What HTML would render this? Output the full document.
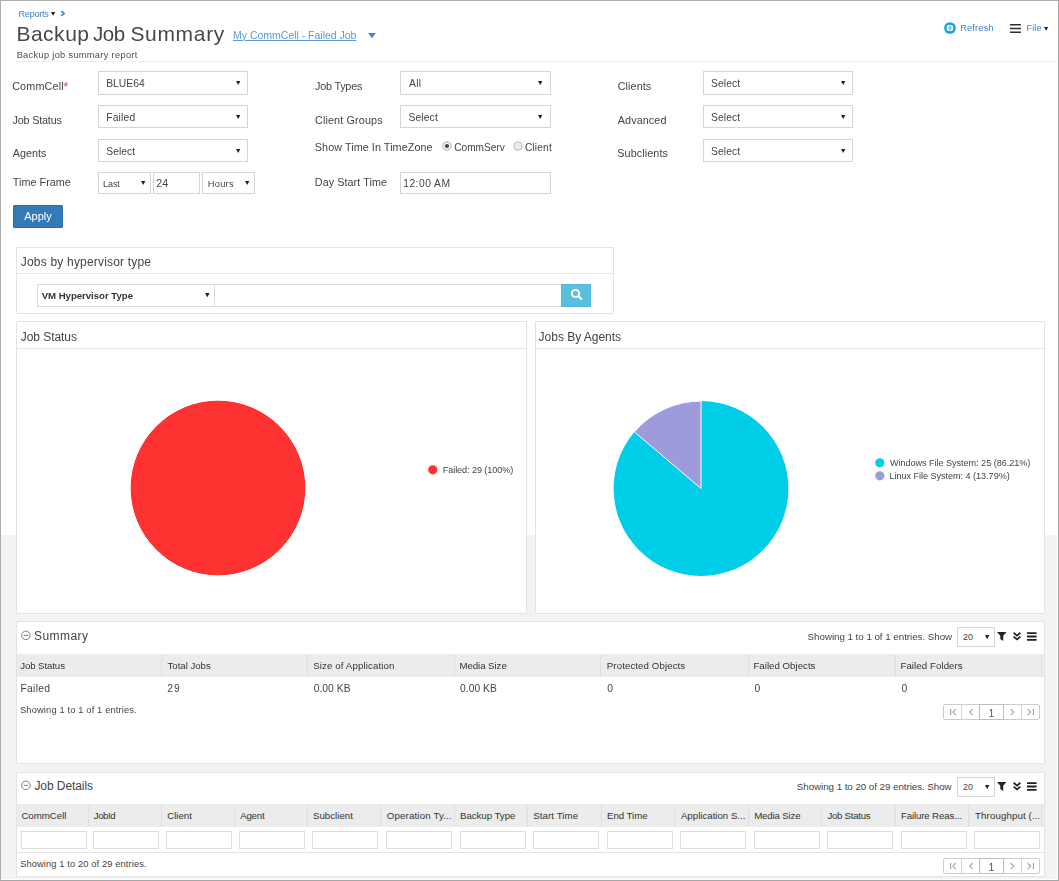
<!DOCTYPE html>
<html><head><meta charset="utf-8"><title>Backup Job Summary</title>
<style>
*{box-sizing:border-box;margin:0;padding:0}
html,body{width:1059px;height:881px;overflow:hidden;background:#fff}
body{font-family:"Liberation Sans",sans-serif;color:#444;position:relative;font-size:12px}
.abs{position:absolute}
#pg{position:absolute;left:0;top:0;width:1059px;height:881px;overflow:hidden;filter:blur(0.3px)}
.t{position:absolute;white-space:nowrap}
.box{position:absolute;background:#fff;border:1px solid #d5d5d5}
.panel{position:absolute;background:#fff;border:1px solid #e3e3e3;border-radius:1px}
.hl{position:absolute;height:1px;background:#e6e6e6}
.vl{position:absolute;width:1px;background:#e0e0e0}
svg{display:block;overflow:visible}
</style></head><body>
<div id="pg">
<div class="abs" style="left:1px;top:535px;width:1056px;height:344px;background:#f3f3f3"></div>
<div class="t" style="left:18.55px;top:8.05px;font-size:9.1px;line-height:13px;color:#3f80c6;letter-spacing:-0.264px;">Reports</div>
<svg class="abs" style="left:50.6px;top:12.1px" width="4.3" height="3.8" viewBox="0 0 4.3 3.8"><path d="M0 0H4.3L2.15 3.8Z" fill="#222"/></svg>
<svg class="abs" style="left:60px;top:10px" width="6" height="7" viewBox="0 0 6 7"><path d="M1.2 1.0L4.2 3.5L1.2 6" fill="none" stroke="#2b80c4" stroke-width="1.5"/></svg>
<div class="t" style="left:16.38px;top:20.12px;font-size:21px;line-height:27px;color:#474747;letter-spacing:0.516px;">Backup</div>
<div class="t" style="left:92.99px;top:20.30px;font-size:20.5px;line-height:27px;color:#474747;letter-spacing:-0.449px;">Job</div>
<div class="t" style="left:130.41px;top:20.12px;font-size:21px;line-height:27px;color:#474747;letter-spacing:0.678px;">Summary</div>
<div class="t" style="left:233.03px;top:27.83px;font-size:10.6px;line-height:15px;color:#5a9bd8;letter-spacing:-0.059px;text-decoration:underline;">My CommCell - Failed Job</div>
<svg class="abs" style="left:367.6px;top:33.3px" width="7.8" height="5.2" viewBox="0 0 7.8 5.2"><path d="M0 0H7.8L3.9 5.2Z" fill="#3388dd"/></svg>
<div class="t" style="left:16.65px;top:48.51px;font-size:9.2px;line-height:13px;color:#4c4c4c;letter-spacing:0.347px;">Backup job summary report</div>
<div class="abs" style="left:17px;top:61px;width:1040px;height:1px;background:#eeeeee"></div>
<svg class="abs" style="left:943.7px;top:21.7px" width="13" height="13" viewBox="0 0 13 13"><circle cx="6" cy="6" r="5.85" fill="#1ba1e2"/><circle cx="6" cy="6" r="3.3" fill="#fff"/><circle cx="6" cy="6" r="1.8" fill="#1ba1e2"/><path d="M5.2 1.9H6.8V4Z M6.8 10.1H5.2V8Z" fill="#1ba1e2"/><path d="M4 6L5.4 4.8V7.2Z M8 6L6.6 4.8V7.2Z" fill="#fff"/></svg>
<div class="t" style="left:960.26px;top:21.61px;font-size:9.2px;line-height:13px;color:#3f80c6;letter-spacing:0.187px;">Refresh</div>
<svg class="abs" style="left:1010px;top:23px" width="12" height="11" viewBox="0 0 12 11"><path d="M0 1.1H10.9V2.5H0Z M0 4.85H10.9V6.25H0Z M0 8.6H10.9V10H0Z" fill="#2e2e2e"/></svg>
<div class="t" style="left:1026.56px;top:21.68px;font-size:9px;line-height:13px;color:#3f80c6;letter-spacing:0.112px;">File</div>
<svg class="abs" style="left:1043.8px;top:27.3px" width="4.2" height="3.7" viewBox="0 0 4.2 3.7"><path d="M0 0H4.2L2.1 3.7Z" fill="#222"/></svg>
<div class="t" style="left:12.16px;top:78.86px;font-size:10.8px;line-height:15px;color:#444;letter-spacing:0.164px;">CommCell</div>
<div class="t" style="left:63.19px;top:77.90px;font-size:13px;line-height:18px;color:#f5403c;">*</div>
<div class="t" style="left:12.40px;top:113.46px;font-size:10.8px;line-height:15px;color:#444;letter-spacing:-0.164px;">Job Status</div>
<div class="t" style="left:12.84px;top:146.16px;font-size:10.8px;line-height:15px;color:#444;">Agents</div>
<div class="t" style="left:12.75px;top:174.96px;font-size:10.8px;line-height:15px;color:#444;letter-spacing:0.035px;">Time Frame</div>
<div class="t" style="left:315.08px;top:78.86px;font-size:10.8px;line-height:15px;color:#444;letter-spacing:-0.220px;">Job Types</div>
<div class="t" style="left:314.94px;top:113.46px;font-size:10.8px;line-height:15px;color:#444;letter-spacing:0.141px;">Client Groups</div>
<div class="t" style="left:314.81px;top:139.76px;font-size:10.8px;line-height:15px;color:#444;letter-spacing:0.066px;">Show Time In TimeZone</div>
<div class="t" style="left:314.84px;top:174.96px;font-size:10.8px;line-height:15px;color:#444;letter-spacing:0.055px;">Day Start Time</div>
<div class="t" style="left:617.70px;top:78.86px;font-size:10.8px;line-height:15px;color:#444;letter-spacing:0.092px;">Clients</div>
<div class="t" style="left:617.78px;top:113.46px;font-size:10.8px;line-height:15px;color:#444;letter-spacing:0.096px;">Advanced</div>
<div class="t" style="left:617.31px;top:146.16px;font-size:10.8px;line-height:15px;color:#444;letter-spacing:0.094px;">Subclients</div>
<div class="box" style="left:98px;top:71px;width:150px;height:24px;"></div>
<div class="t" style="left:106.19px;top:76.73px;font-size:10.3px;line-height:14px;color:#444;letter-spacing:0.037px;">BLUE64</div>
<svg class="abs" style="left:235.8px;top:81.10000000000001px" width="4.4" height="3.9" viewBox="0 0 4.4 3.9"><path d="M0 0H4.4L2.2 3.9Z" fill="#222"/></svg>
<div class="box" style="left:98px;top:105px;width:150px;height:23px;"></div>
<div class="t" style="left:106.19px;top:111.13px;font-size:10.3px;line-height:14px;color:#444;letter-spacing:0.177px;">Failed</div>
<svg class="abs" style="left:235.8px;top:114.7px" width="4.4" height="3.9" viewBox="0 0 4.4 3.9"><path d="M0 0H4.4L2.2 3.9Z" fill="#222"/></svg>
<div class="box" style="left:98px;top:139px;width:150px;height:23px;"></div>
<div class="t" style="left:106.33px;top:145.03px;font-size:10.3px;line-height:14px;color:#444;letter-spacing:0.042px;">Select</div>
<svg class="abs" style="left:235.8px;top:148.5px" width="4.4" height="3.9" viewBox="0 0 4.4 3.9"><path d="M0 0H4.4L2.2 3.9Z" fill="#222"/></svg>
<div class="box" style="left:98px;top:172px;width:53px;height:22px;"></div>
<div class="t" style="left:103.02px;top:178.08px;font-size:9px;line-height:13px;color:#444;letter-spacing:-0.070px;">Last</div>
<svg class="abs" style="left:141px;top:180.5px" width="4.4" height="3.9" viewBox="0 0 4.4 3.9"><path d="M0 0H4.4L2.2 3.9Z" fill="#222"/></svg>
<div class="box" style="left:153px;top:172px;width:47px;height:22px;"></div>
<div class="t" style="left:156.37px;top:175.53px;font-size:10.6px;line-height:15px;color:#444;">24</div>
<div class="box" style="left:202px;top:172px;width:53px;height:22px;"></div>
<div class="t" style="left:207.76px;top:177.98px;font-size:9.3px;line-height:13px;color:#444;letter-spacing:0.264px;">Hours</div>
<svg class="abs" style="left:244.8px;top:180.5px" width="4.4" height="3.9" viewBox="0 0 4.4 3.9"><path d="M0 0H4.4L2.2 3.9Z" fill="#222"/></svg>
<div class="box" style="left:400px;top:71px;width:151px;height:24px;"></div>
<div class="t" style="left:408.88px;top:76.73px;font-size:10.3px;line-height:14px;color:#444;letter-spacing:0.419px;">All</div>
<svg class="abs" style="left:537.5px;top:81.10000000000001px" width="4.4" height="3.9" viewBox="0 0 4.4 3.9"><path d="M0 0H4.4L2.2 3.9Z" fill="#222"/></svg>
<div class="box" style="left:400px;top:105px;width:151px;height:23px;"></div>
<div class="t" style="left:408.44px;top:111.13px;font-size:10.3px;line-height:14px;color:#444;letter-spacing:0.142px;">Select</div>
<svg class="abs" style="left:537.5px;top:114.7px" width="4.4" height="3.9" viewBox="0 0 4.4 3.9"><path d="M0 0H4.4L2.2 3.9Z" fill="#222"/></svg>
<div class="box" style="left:400px;top:172px;width:151px;height:22px;"></div>
<div class="t" style="left:403.22px;top:177.13px;font-size:10.3px;line-height:14px;color:#444;letter-spacing:0.473px;">12:00 AM</div>
<div class="box" style="left:703px;top:71px;width:150px;height:24px;"></div>
<div class="t" style="left:710.91px;top:76.73px;font-size:10.3px;line-height:14px;color:#444;letter-spacing:0.114px;">Select</div>
<svg class="abs" style="left:841px;top:81.10000000000001px" width="4.4" height="3.9" viewBox="0 0 4.4 3.9"><path d="M0 0H4.4L2.2 3.9Z" fill="#222"/></svg>
<div class="box" style="left:703px;top:105px;width:150px;height:23px;"></div>
<div class="t" style="left:710.91px;top:111.13px;font-size:10.3px;line-height:14px;color:#444;letter-spacing:0.114px;">Select</div>
<svg class="abs" style="left:841px;top:114.7px" width="4.4" height="3.9" viewBox="0 0 4.4 3.9"><path d="M0 0H4.4L2.2 3.9Z" fill="#222"/></svg>
<div class="box" style="left:703px;top:139px;width:150px;height:23px;"></div>
<div class="t" style="left:710.91px;top:145.03px;font-size:10.3px;line-height:14px;color:#444;letter-spacing:0.114px;">Select</div>
<svg class="abs" style="left:841px;top:148.5px" width="4.4" height="3.9" viewBox="0 0 4.4 3.9"><path d="M0 0H4.4L2.2 3.9Z" fill="#222"/></svg>
<svg class="abs" style="left:442px;top:140.8px" width="10" height="10" viewBox="0 0 10 10"><circle cx="5" cy="5" r="4.2" fill="#f4f4f4" stroke="#a2a2a2" stroke-width="0.9"/><circle cx="5" cy="5" r="2.1" fill="#444"/></svg>
<svg class="abs" style="left:513.2px;top:140.5px" width="10" height="10" viewBox="0 0 10 10"><circle cx="5" cy="5" r="4.1" fill="#ececec" stroke="#ababab" stroke-width="0.9"/></svg>
<div class="t" style="left:454.30px;top:140.50px;font-size:10.1px;line-height:14px;color:#444;">CommServ</div>
<div class="t" style="left:524.89px;top:140.50px;font-size:10.1px;line-height:14px;color:#444;letter-spacing:0.210px;">Client</div>
<div class="abs" style="left:13px;top:205px;width:50px;height:23px;background:#337ab7;border:1px solid #2e6da4;border-radius:1px"></div>
<div class="t" style="left:24.18px;top:208.79px;font-size:11px;line-height:15px;color:#fff;letter-spacing:0.033px;">Apply</div>
<div class="panel" style="left:16px;top:247px;width:598px;height:67px;"></div>
<div class="hl" style="left:17px;top:273px;width:596px;height:1px;"></div>
<div class="t" style="left:20.82px;top:253.94px;font-size:12px;line-height:16px;color:#444;letter-spacing:0.189px;">Jobs by hypervisor type</div>
<div class="box" style="left:37px;top:284px;width:178px;height:23px;border-color:#dbdbdb"></div>
<div class="t" style="left:41.65px;top:288.67px;font-size:9.6px;line-height:14px;color:#333;letter-spacing:-0.012px;font-weight:bold;">VM Hypervisor Type</div>
<svg class="abs" style="left:205.2px;top:293.4px" width="4.6" height="4.2" viewBox="0 0 4.6 4.2"><path d="M0 0H4.6L2.3 4.2Z" fill="#222"/></svg>
<div class="box" style="left:214px;top:284px;width:348px;height:23px;border-color:#dbdbdb"></div>
<div class="abs" style="left:561px;top:284px;width:30px;height:23px;background:#5bc0de;border:1px solid #4fbbdb"></div>
<svg class="abs" style="left:570.2px;top:288.3px" width="13" height="13" viewBox="0 0 13 13"><circle cx="5.5" cy="5.5" r="3.6" fill="none" stroke="#fff" stroke-width="1.9"/><path d="M8.3 8.2L11.3 10.9" stroke="#fff" stroke-width="2.1" stroke-linecap="round"/></svg>
<div class="panel" style="left:16px;top:321px;width:511px;height:293px;"></div>
<div class="hl" style="left:17px;top:348px;width:509px;height:1px;"></div>
<div class="t" style="left:20.82px;top:329.44px;font-size:12px;line-height:16px;color:#444;letter-spacing:-0.065px;">Job Status</div>
<svg class="abs" style="left:130px;top:400px" width="176" height="176" viewBox="0 0 176 176"><circle cx="88" cy="88" r="86.8" fill="#ff3232" stroke="#ff2626" stroke-width="1"/></svg>
<svg class="abs" style="left:428px;top:464.5px" width="10" height="10" viewBox="0 0 10 10"><circle cx="4.8" cy="4.8" r="4.6" fill="#ff3232"/></svg>
<div class="t" style="left:442.75px;top:464.05px;font-size:9.1px;line-height:13px;color:#444;letter-spacing:-0.080px;">Failed: 29 (100%)</div>
<div class="panel" style="left:535px;top:321px;width:510px;height:293px;"></div>
<div class="hl" style="left:536px;top:348px;width:508px;height:1px;"></div>
<div class="t" style="left:538.62px;top:329.44px;font-size:12px;line-height:16px;color:#444;letter-spacing:-0.023px;">Jobs By Agents</div>
<svg class="abs" style="left:0;top:0" width="1059" height="881" viewBox="0 0 1059 881"><circle cx="701.0" cy="488.5" r="87.4" fill="#00cde8"/><path d="M701.0 488.5L634.40 431.91A87.4 87.4 0 0 1 701.0 401.1Z" fill="#9d9bd9" stroke="#fff" stroke-width="1" stroke-linejoin="round"/></svg>
<svg class="abs" style="left:874.8px;top:458.3px" width="10" height="10" viewBox="0 0 10 10"><circle cx="4.8" cy="4.8" r="4.6" fill="#00cde8"/></svg>
<svg class="abs" style="left:874.8px;top:470.8px" width="10" height="10" viewBox="0 0 10 10"><circle cx="4.8" cy="4.8" r="4.6" fill="#9d9bd9"/></svg>
<div class="t" style="left:889.94px;top:456.85px;font-size:9.1px;line-height:13px;color:#444;letter-spacing:-0.038px;">Windows File System: 25 (86.21%)</div>
<div class="t" style="left:889.44px;top:470.35px;font-size:9.1px;line-height:13px;color:#444;letter-spacing:-0.036px;">Linux File System: 4 (13.79%)</div>
<div class="panel" style="left:16px;top:621px;width:1029px;height:143px;"></div>
<svg class="abs" style="left:20.3px;top:630.2px" width="11" height="11" viewBox="0 0 11 11"><circle cx="5.9" cy="5.4" r="4.25" fill="none" stroke="#7e7e7e" stroke-width="1"/><path d="M3.6 5.4H8.2" stroke="#7e7e7e" stroke-width="1"/></svg>
<div class="t" style="left:33.96px;top:627.84px;font-size:12px;line-height:16px;color:#444;letter-spacing:0.455px;">Summary</div>
<div class="t" style="left:807.58px;top:630.00px;font-size:9.8px;line-height:14px;color:#444;letter-spacing:-0.043px;">Showing 1 to 1 of 1 entries. Show</div>
<div class="box" style="left:957px;top:627px;width:38px;height:20px;"></div>
<div class="t" style="left:962.99px;top:630.72px;font-size:8.9px;line-height:13px;color:#444;">20</div>
<svg class="abs" style="left:984.7px;top:634.5px" width="4.4" height="4.2" viewBox="0 0 4.4 4.2"><path d="M0 0H4.4L2.2 4.2Z" fill="#222"/></svg>
<svg class="abs" style="left:996.9px;top:631.9px" width="10" height="9" viewBox="0 0 10 9"><path d="M0 0H9.5L6.2 3.8V8.9L3.3 7.1V3.8Z" fill="#222"/></svg>
<svg class="abs" style="left:1013.3px;top:632.2px" width="8" height="9" viewBox="0 0 8 9"><path d="M0.6 0.8L4 3.6L7.4 0.8M0.6 4.6L4 7.4L7.4 4.6" fill="none" stroke="#222" stroke-width="1.75"/></svg>
<svg class="abs" style="left:1027.3px;top:632px" width="10" height="10" viewBox="0 0 10 10"><path d="M0 0.2H9.6V2H0Z M0 3.6H9.6V5.4H0Z M0 7H9.6V8.8H0Z" fill="#222"/></svg>
<div class="abs" style="left:17px;top:654px;width:1027px;height:23px;background:#ececec"></div>
<div class="vl" style="left:161px;top:654px;width:1px;height:23px;"></div>
<div class="vl" style="left:307px;top:654px;width:1px;height:23px;"></div>
<div class="vl" style="left:454px;top:654px;width:1px;height:23px;"></div>
<div class="vl" style="left:600px;top:654px;width:1px;height:23px;"></div>
<div class="vl" style="left:748px;top:654px;width:1px;height:23px;"></div>
<div class="vl" style="left:895px;top:654px;width:1px;height:23px;"></div>
<div class="vl" style="left:1041px;top:654px;width:1px;height:23px;"></div>
<div class="t" style="left:20.25px;top:659.44px;font-size:9.7px;line-height:14px;color:#333;letter-spacing:-0.115px;">Job Status</div>
<div class="t" style="left:167.47px;top:659.44px;font-size:9.7px;line-height:14px;color:#333;letter-spacing:-0.034px;">Total Jobs</div>
<div class="t" style="left:313.16px;top:659.44px;font-size:9.7px;line-height:14px;color:#333;letter-spacing:0.116px;">Size of Application</div>
<div class="t" style="left:459.41px;top:659.44px;font-size:9.7px;line-height:14px;color:#333;letter-spacing:-0.062px;">Media Size</div>
<div class="t" style="left:606.80px;top:659.44px;font-size:9.7px;line-height:14px;color:#333;letter-spacing:0.087px;">Protected Objects</div>
<div class="t" style="left:753.42px;top:659.44px;font-size:9.7px;line-height:14px;color:#333;letter-spacing:0.011px;">Failed Objects</div>
<div class="t" style="left:900.42px;top:659.44px;font-size:9.7px;line-height:14px;color:#333;letter-spacing:0.070px;">Failed Folders</div>
<div class="t" style="left:20.49px;top:682.23px;font-size:10.3px;line-height:14px;color:#444;letter-spacing:0.279px;">Failed</div>
<div class="t" style="left:167.24px;top:682.23px;font-size:10.3px;line-height:14px;color:#444;letter-spacing:1.145px;">29</div>
<div class="t" style="left:313.68px;top:682.23px;font-size:10.3px;line-height:14px;color:#444;letter-spacing:0.042px;">0.00 KB</div>
<div class="t" style="left:460.00px;top:682.23px;font-size:10.3px;line-height:14px;color:#444;letter-spacing:0.028px;">0.00 KB</div>
<div class="t" style="left:607.30px;top:682.23px;font-size:10.3px;line-height:14px;color:#444;">0</div>
<div class="t" style="left:754.39px;top:682.23px;font-size:10.3px;line-height:14px;color:#444;">0</div>
<div class="t" style="left:901.39px;top:682.23px;font-size:10.3px;line-height:14px;color:#444;">0</div>
<div class="t" style="left:20.02px;top:703.98px;font-size:9.3px;line-height:13px;color:#444;letter-spacing:0.148px;">Showing 1 to 1 of 1 entries.</div>
<div class="abs" style="left:943px;top:704px;width:97px;height:16px;border:1px solid #cdcdcd;border-radius:2px;background:#fff"></div>
<div class="abs" style="left:961px;top:704px;width:1px;height:16px;background:#d2d2d2"></div>
<div class="abs" style="left:979px;top:704px;width:1px;height:16px;background:#d2d2d2"></div>
<div class="abs" style="left:1003px;top:704px;width:1px;height:16px;background:#d2d2d2"></div>
<div class="abs" style="left:1021px;top:704px;width:1px;height:16px;background:#d2d2d2"></div>
<div class="abs" style="left:979px;top:704px;width:25px;height:16px;border:1px solid #bdbdbd;border-radius:1px"></div>
<svg class="abs" style="left:0;top:0" width="1059" height="881" viewBox="0 0 1059 881"><path d="M950.6 709.1V715.1M955.9 709.1L952.9 712.1L955.9 715.1M972.7 709.1L969.7 712.1L972.7 715.1M1010.7 709.1L1013.7 712.1L1010.7 715.1M1027.7 709.1L1030.7 712.1L1027.7 715.1M1033.4 709.1V715.1" fill="none" stroke="#a4a4a4" stroke-width="1.15"/></svg>
<div class="t" style="left:988.50px;top:706.06px;font-size:10.5px;line-height:15px;color:#555;">1</div>
<div class="panel" style="left:16px;top:772px;width:1029px;height:105px;"></div>
<svg class="abs" style="left:20.3px;top:780.2px" width="11" height="11" viewBox="0 0 11 11"><circle cx="5.9" cy="5.4" r="4.25" fill="none" stroke="#7e7e7e" stroke-width="1"/><path d="M3.6 5.4H8.2" stroke="#7e7e7e" stroke-width="1"/></svg>
<div class="t" style="left:34.42px;top:778.04px;font-size:12px;line-height:16px;color:#444;letter-spacing:-0.075px;">Job Details</div>
<div class="t" style="left:796.84px;top:780.00px;font-size:9.8px;line-height:14px;color:#444;letter-spacing:-0.059px;">Showing 1 to 20 of 29 entries. Show</div>
<div class="box" style="left:957px;top:777px;width:38px;height:20px;"></div>
<div class="t" style="left:962.99px;top:780.72px;font-size:8.9px;line-height:13px;color:#444;">20</div>
<svg class="abs" style="left:984.7px;top:784.5px" width="4.4" height="4.2" viewBox="0 0 4.4 4.2"><path d="M0 0H4.4L2.2 4.2Z" fill="#222"/></svg>
<svg class="abs" style="left:996.9px;top:781.9px" width="10" height="9" viewBox="0 0 10 9"><path d="M0 0H9.5L6.2 3.8V8.9L3.3 7.1V3.8Z" fill="#222"/></svg>
<svg class="abs" style="left:1013.3px;top:782.2px" width="8" height="9" viewBox="0 0 8 9"><path d="M0.6 0.8L4 3.6L7.4 0.8M0.6 4.6L4 7.4L7.4 4.6" fill="none" stroke="#222" stroke-width="1.75"/></svg>
<svg class="abs" style="left:1027.3px;top:782px" width="10" height="10" viewBox="0 0 10 10"><path d="M0 0.2H9.6V2H0Z M0 3.6H9.6V5.4H0Z M0 7H9.6V8.8H0Z" fill="#222"/></svg>
<div class="abs" style="left:17px;top:804px;width:1027px;height:23px;background:#ececec"></div>
<div class="t" style="left:21.38px;top:809.24px;font-size:9.7px;line-height:14px;color:#333;letter-spacing:-0.012px;">CommCell</div>
<div class="box" style="left:21px;top:831px;width:66px;height:18px;border:1px solid #dedede"></div>
<div class="vl" style="left:88px;top:804px;width:1px;height:23px;"></div>
<div class="t" style="left:93.74px;top:809.24px;font-size:9.7px;line-height:14px;color:#333;letter-spacing:-0.435px;">JobId</div>
<div class="box" style="left:93px;top:831px;width:66px;height:18px;border:1px solid #dedede"></div>
<div class="vl" style="left:161px;top:804px;width:1px;height:23px;"></div>
<div class="t" style="left:167.18px;top:809.24px;font-size:9.7px;line-height:14px;color:#333;letter-spacing:-0.020px;">Client</div>
<div class="box" style="left:166px;top:831px;width:66px;height:18px;border:1px solid #dedede"></div>
<div class="vl" style="left:234px;top:804px;width:1px;height:23px;"></div>
<div class="t" style="left:240.27px;top:809.24px;font-size:9.7px;line-height:14px;color:#333;letter-spacing:-0.245px;">Agent</div>
<div class="box" style="left:239px;top:831px;width:66px;height:18px;border:1px solid #dedede"></div>
<div class="vl" style="left:307px;top:804px;width:1px;height:23px;"></div>
<div class="t" style="left:312.93px;top:809.24px;font-size:9.7px;line-height:14px;color:#333;letter-spacing:0.025px;">Subclient</div>
<div class="box" style="left:312px;top:831px;width:66px;height:18px;border:1px solid #dedede"></div>
<div class="vl" style="left:380px;top:804px;width:1px;height:23px;"></div>
<div class="t" style="left:386.85px;top:809.24px;font-size:9.7px;line-height:14px;color:#333;letter-spacing:0.151px;">Operation Ty...</div>
<div class="box" style="left:386px;top:831px;width:66px;height:18px;border:1px solid #dedede"></div>
<div class="vl" style="left:454px;top:804px;width:1px;height:23px;"></div>
<div class="t" style="left:460.01px;top:809.24px;font-size:9.7px;line-height:14px;color:#333;letter-spacing:-0.046px;">Backup Type</div>
<div class="box" style="left:460px;top:831px;width:66px;height:18px;border:1px solid #dedede"></div>
<div class="vl" style="left:527px;top:804px;width:1px;height:23px;"></div>
<div class="t" style="left:533.16px;top:809.24px;font-size:9.7px;line-height:14px;color:#333;letter-spacing:0.088px;">Start Time</div>
<div class="box" style="left:533px;top:831px;width:66px;height:18px;border:1px solid #dedede"></div>
<div class="vl" style="left:601px;top:804px;width:1px;height:23px;"></div>
<div class="t" style="left:607.02px;top:809.24px;font-size:9.7px;line-height:14px;color:#333;letter-spacing:-0.047px;">End Time</div>
<div class="box" style="left:607px;top:831px;width:66px;height:18px;border:1px solid #dedede"></div>
<div class="vl" style="left:674px;top:804px;width:1px;height:23px;"></div>
<div class="t" style="left:680.93px;top:809.24px;font-size:9.7px;line-height:14px;color:#333;letter-spacing:-0.009px;">Application S...</div>
<div class="box" style="left:680px;top:831px;width:66px;height:18px;border:1px solid #dedede"></div>
<div class="vl" style="left:748px;top:804px;width:1px;height:23px;"></div>
<div class="t" style="left:754.24px;top:809.24px;font-size:9.7px;line-height:14px;color:#333;letter-spacing:-0.182px;">Media Size</div>
<div class="box" style="left:754px;top:831px;width:66px;height:18px;border:1px solid #dedede"></div>
<div class="vl" style="left:821px;top:804px;width:1px;height:23px;"></div>
<div class="t" style="left:827.39px;top:809.24px;font-size:9.7px;line-height:14px;color:#333;letter-spacing:-0.275px;">Job Status</div>
<div class="box" style="left:827px;top:831px;width:66px;height:18px;border:1px solid #dedede"></div>
<div class="vl" style="left:895px;top:804px;width:1px;height:23px;"></div>
<div class="t" style="left:901.02px;top:809.24px;font-size:9.7px;line-height:14px;color:#333;letter-spacing:-0.150px;">Failure Reas...</div>
<div class="box" style="left:901px;top:831px;width:66px;height:18px;border:1px solid #dedede"></div>
<div class="vl" style="left:968px;top:804px;width:1px;height:23px;"></div>
<div class="t" style="left:975.09px;top:809.24px;font-size:9.7px;line-height:14px;color:#333;letter-spacing:0.116px;">Throughput (...</div>
<div class="box" style="left:974px;top:831px;width:66px;height:18px;border:1px solid #dedede"></div>
<div class="vl" style="left:1041px;top:804px;width:1px;height:23px;"></div>
<div class="hl" style="left:17px;top:852px;width:1027px;height:1px;"></div>
<div class="t" style="left:20.15px;top:858.28px;font-size:9.3px;line-height:13px;color:#444;letter-spacing:0.117px;">Showing 1 to 20 of 29 entries.</div>
<div class="abs" style="left:943px;top:858px;width:97px;height:16px;border:1px solid #cdcdcd;border-radius:2px;background:#fff"></div>
<div class="abs" style="left:961px;top:858px;width:1px;height:16px;background:#d2d2d2"></div>
<div class="abs" style="left:979px;top:858px;width:1px;height:16px;background:#d2d2d2"></div>
<div class="abs" style="left:1003px;top:858px;width:1px;height:16px;background:#d2d2d2"></div>
<div class="abs" style="left:1021px;top:858px;width:1px;height:16px;background:#d2d2d2"></div>
<div class="abs" style="left:979px;top:858px;width:25px;height:16px;border:1px solid #bdbdbd;border-radius:1px"></div>
<svg class="abs" style="left:0;top:0" width="1059" height="881" viewBox="0 0 1059 881"><path d="M950.6 863.1V869.1M955.9 863.1L952.9 866.1L955.9 869.1M972.7 863.1L969.7 866.1L972.7 869.1M1010.7 863.1L1013.7 866.1L1010.7 869.1M1027.7 863.1L1030.7 866.1L1027.7 869.1M1033.4 863.1V869.1" fill="none" stroke="#a4a4a4" stroke-width="1.15"/></svg>
<div class="t" style="left:988.50px;top:860.06px;font-size:10.5px;line-height:15px;color:#555;">1</div>
</div>
<div class="abs" style="left:1057px;top:1px;width:1px;height:879px;background:#fff"></div>
<div class="abs" style="left:1px;top:879px;width:1057px;height:1px;background:#fff"></div>
<div class="abs" style="left:0px;top:0px;width:1059px;height:1px;background:#adadad"></div>
<div class="abs" style="left:0px;top:0px;width:1px;height:881px;background:#adadad"></div>
<div class="abs" style="left:1058px;top:0px;width:1px;height:881px;background:#a6a6a6"></div>
<div class="abs" style="left:0px;top:880px;width:1059px;height:1px;background:#a6a6a6"></div>
</body></html>
